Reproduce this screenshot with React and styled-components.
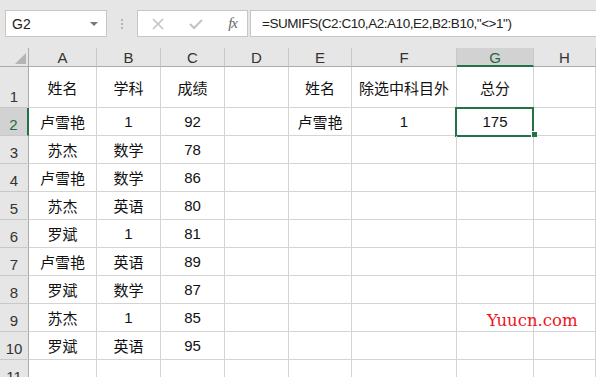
import React from 'react'
import styled, { createGlobalStyle, css } from 'styled-components'

const GlobalStyle = createGlobalStyle`
  html, body {
    margin: 0;
    padding: 0;
    background: #ffffff;
  }
  body {
    font-family: "Liberation Sans", "Noto Sans CJK SC", sans-serif;
  }
`

const Page = styled.div`
  position: relative;
  width: 596px;
  height: 377px;
  overflow: hidden;
  background: #ffffff;
`

const Toolbar = styled.div`
  display: flex;
  align-items: flex-start;
  height: 48px;
  padding: 10px 0 0 5px;
  box-sizing: border-box;
  background: #e6e6e6;
`

const NameBox = styled.div`
  display: flex;
  align-items: center;
  justify-content: space-between;
  width: 102px;
  height: 27px;
  padding: 0 6px 0 6px;
  box-sizing: border-box;
  background: #ffffff;
  border: 1px solid #c6c6c6;
  font-size: 14px;
  color: #222;
`

const Caret = styled.span`
  width: 0;
  height: 0;
  border-left: 4px solid transparent;
  border-right: 4px solid transparent;
  border-top: 4px solid #777;
  margin-right: 2px;
`

const Grip = styled.div`
  display: flex;
  flex-direction: column;
  align-items: center;
  justify-content: center;
  gap: 2px;
  width: 30px;
  height: 27px;

  span {
    width: 2px;
    height: 2px;
    background: #b5b5b5;
  }
`

const FxBox = styled.div`
  display: flex;
  align-items: center;
  justify-content: space-between;
  width: 111px;
  height: 27px;
  padding: 0 10px 0 14px;
  box-sizing: border-box;
  background: #ffffff;
  border: 1px solid #c6c6c6;
`

const FxLabel = styled.span`
  font-family: "Liberation Serif", serif;
  font-style: italic;
  font-size: 15px;
  color: #666;
  letter-spacing: -1px;
`

const FormulaInput = styled.div`
  flex: 1;
  display: flex;
  align-items: center;
  height: 27px;
  margin-left: 2px;
  padding-left: 11px;
  box-sizing: border-box;
  background: #ffffff;
  border: 1px solid #c6c6c6;
  border-right: none;
  font-size: 13.5px;
  letter-spacing: -0.45px;
  color: #222;
  white-space: nowrap;
`

const Sheet = styled.div`
  display: grid;
  grid-template-columns: 29px 68px 64px 64px 64px 63px 105px 77px 1fr;
  grid-template-rows: 19px 41px;
  grid-auto-rows: 28px;
`

const headerBase = css`
  display: flex;
  justify-content: center;
  box-sizing: border-box;
  background: #e6e6e6;
  font-size: 15px;
  color: #333;
`

const Corner = styled.div`
  ${headerBase};
  position: relative;
  border-right: 1px solid #ababab;
  border-bottom: 1px solid #ababab;

  &::after {
    content: '';
    position: absolute;
    right: 2px;
    bottom: 2px;
    width: 0;
    height: 0;
    border-left: 11px solid transparent;
    border-bottom: 11px solid #b4b4b4;
  }
`

const ColHead = styled.div`
  ${headerBase};
  align-items: center;
  border-right: 1px solid #c8c8c8;
  border-bottom: 1px solid #ababab;
  padding-top: 1px;

  ${p => p.$active && css`
    background: #d2d2d2;
    color: #1e6b41;
    border-bottom: 2px solid #217346;
  `}
`

const RowHead = styled.div`
  ${headerBase};
  align-items: flex-end;
  border-right: 1px solid #ababab;
  border-bottom: 1px solid #c8c8c8;
  line-height: 18px;
  padding-bottom: 1px;

  ${p => p.$active && css`
    background: #d2d2d2;
    color: #1e6b41;
    border-right: 2px solid #217346;
  `}
`

const Cell = styled.div`
  position: relative;
  display: flex;
  align-items: center;
  justify-content: center;
  box-sizing: border-box;
  border-right: 1px solid #d4d4d4;
  border-bottom: 1px solid #d4d4d4;
  font-size: 15px;
  color: #111;
  white-space: nowrap;

  ${p => p.$selected && css`
    &::after {
      content: '';
      position: absolute;
      left: -2px;
      top: -1px;
      width: 79px;
      height: 30px;
      box-sizing: border-box;
      border: 2px solid #217346;
    }
    &::before {
      content: '';
      position: absolute;
      right: -4px;
      bottom: -2px;
      width: 5px;
      height: 5px;
      background: #217346;
      border-left: 1px solid #fff;
      border-top: 1px solid #fff;
      z-index: 1;
    }
  `}
`

const Watermark = styled.div`
  position: absolute;
  left: 487px;
  top: 311px;
  font-family: "DejaVu Serif", serif;
  font-size: 16.5px;
  letter-spacing: 0;
  color: #f0141e;
`

const columns = ['A', 'B', 'C', 'D', 'E', 'F', 'G', 'H']

const rows = [
  ['姓名', '学科', '成绩', '', '姓名', '除选中科目外', '总分', ''],
  ['卢雪艳', '1', '92', '', '卢雪艳', '1', '175', ''],
  ['苏杰', '数学', '78'],
  ['卢雪艳', '数学', '86'],
  ['苏杰', '英语', '80'],
  ['罗斌', '1', '81'],
  ['卢雪艳', '英语', '89'],
  ['罗斌', '数学', '87'],
  ['苏杰', '1', '85'],
  ['罗斌', '英语', '95'],
  [],
]

const CrossIcon = () => (
  <svg width="12" height="12" viewBox="0 0 12 12">
    <path d="M1 1 L11 11 M11 1 L1 11" stroke="#c3c3c3" strokeWidth="1.6" fill="none" />
  </svg>
)

const CheckIcon = () => (
  <svg width="14" height="12" viewBox="0 0 14 12">
    <path d="M1 6 L5 10 L13 2" stroke="#c3c3c3" strokeWidth="2" fill="none" />
  </svg>
)

const App = () => {
  return (
    <Page>
      <GlobalStyle />
      <Toolbar>
        <NameBox>
          G2
          <Caret />
        </NameBox>
        <Grip>
          <span />
          <span />
          <span />
        </Grip>
        <FxBox>
          <CrossIcon />
          <CheckIcon />
          <FxLabel>fx</FxLabel>
        </FxBox>
        <FormulaInput>=SUMIFS(C2:C10,A2:A10,E2,B2:B10,"&lt;&gt;1")</FormulaInput>
      </Toolbar>
      <Sheet>
        <Corner />
        {columns.map(c => (
          <ColHead key={c} $active={c === 'G'}>{c}</ColHead>
        ))}
        {rows.map((row, r) => (
          <React.Fragment key={r}>
            <RowHead $active={r === 1}>{r + 1}</RowHead>
            {columns.map((c, i) => (
              <Cell key={c} $selected={r === 1 && c === 'G'}>{row[i] || ''}</Cell>
            ))}
          </React.Fragment>
        ))}
      </Sheet>
      <Watermark>Yuucn.com</Watermark>
    </Page>
  )
}

export default App
